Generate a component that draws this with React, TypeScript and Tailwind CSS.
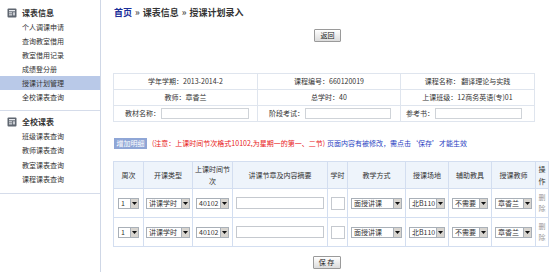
import React from "react";

function Arrow() {
  return (
    <svg width="5" height="3" viewBox="0 0 5 3">
      <path d="M0 0 L5 0 L2.5 3 Z" fill="#111" />
    </svg>
  );
}

function Sel({ text, cls }: { text: string; cls: string }) {
  return (
    <div className={`inline-flex items-center h-[11px] border border-[#a9b0b8] bg-white align-middle ${cls}`}>
      <span className="flex-1 pl-[2px] text-[7px] leading-[9px] text-left text-[#333] whitespace-nowrap">{text}</span>
      <span className="w-[8px] h-[9px] shrink-0 bg-[#d8d5d0] border-l border-[#a9b0b8] flex items-center justify-center">
        <Arrow />
      </span>
    </div>
  );
}

function SideIcon() {
  return (
    <svg width="10" height="10" viewBox="0 0 10 10">
      <rect x="0.5" y="0.5" width="9" height="9" rx="1" fill="#5f6670" />
      <rect x="2" y="2" width="6" height="1.3" fill="#e8eaee" />
      <rect x="2" y="4.3" width="3" height="1.1" fill="#e8eaee" />
      <rect x="2" y="6.3" width="3" height="1.1" fill="#e8eaee" />
      <rect x="5.8" y="4.3" width="2.2" height="3.1" fill="#c9ccd2" />
    </svg>
  );
}

function Btn({ children, cls }: { children: React.ReactNode; cls: string }) {
  return (
    <div
      className={`flex items-center justify-center h-[13px] border border-[#9a9a9a] rounded-[1px] bg-gradient-to-b from-[#ffffff] to-[#dcdcdc] text-[7px] leading-[9px] text-[#222] ${cls}`}
    >
      {children}
    </div>
  );
}

const items1 = ["个人调课申请", "查询教室借用", "教室借用记录", "成绩登分册", "授课计划管理", "全校课表查询"];
const items2 = ["班级课表查询", "教师课表查询", "教室课表查询", "课程课表查询"];

function Row() {
  return (
    <tr className="h-[29px]">
      <td className="border border-[#d3def0] text-center">
        <Sel text="1" cls="w-[21px]" />
      </td>
      <td className="border border-[#d3def0] text-center">
        <Sel text="讲课学时" cls="w-[44px]" />
      </td>
      <td className="border border-[#d3def0] text-center">
        <Sel text="40102" cls="w-[33px]" />
      </td>
      <td className="border border-[#d3def0] text-center">
        <div className="inline-block align-middle w-[88px] h-[12px] border border-[#c5c9cf] bg-white" />
      </td>
      <td className="border border-[#d3def0] text-center">
        <div className="inline-block align-middle w-[14px] h-[13px] border border-[#c5c9cf] bg-white" />
      </td>
      <td className="border border-[#d3def0] text-center">
        <Sel text="面授讲课" cls="w-[51px]" />
      </td>
      <td className="border border-[#d3def0] text-center">
        <Sel text="北B110" cls="w-[36px]" />
      </td>
      <td className="border border-[#d3def0] text-center">
        <Sel text="不需要" cls="w-[36px]" />
      </td>
      <td className="border border-[#d3def0] text-center">
        <Sel text="章香兰" cls="w-[37px]" />
      </td>
      <td className="border border-[#d3def0] text-center text-[7px] leading-[11px] text-[#999]">
        删<br />除
      </td>
    </tr>
  );
}

export default function App() {
  return (
    <div
      className="flex w-[554px] h-[272px] bg-white overflow-hidden"
      style={{ fontFamily: '"Noto Sans CJK SC", "Noto Sans", sans-serif' }}
    >
      {/* Sidebar */}
      <div className="w-[101px] shrink-0 h-full border-r border-[#cfd7e6] flex flex-col">
        <div className="pt-[6px] pb-[6px] border-b border-[#d5dcea]">
          <div className="h-[14px] flex items-center pl-[7px] gap-[5px]">
            <SideIcon />
            <span className="text-[8px] font-bold text-[#333] leading-[10px]">课表信息</span>
          </div>
          {items1.map((t) => (
            <div
              key={t}
              className={`h-[14px] flex items-center pl-[22px] text-[7px] leading-[9px] text-[#333] ${t === "授课计划管理" ? "bg-[#b9c9e8]" : ""}`}
            >
              {t}
            </div>
          ))}
        </div>
        <div className="pt-[4px] pb-[6px] border-b border-[#d5dcea]">
          <div className="h-[14px] flex items-center pl-[7px] gap-[5px]">
            <SideIcon />
            <span className="text-[8px] font-bold text-[#333] leading-[10px]">全校课表</span>
          </div>
          {items2.map((t) => (
            <div key={t} className="h-[14.5px] flex items-center pl-[22px] text-[7px] leading-[9px] text-[#333]">
              {t}
            </div>
          ))}
        </div>
      </div>

      {/* Main */}
      <div className="flex-1 flex flex-col">
        <div className="mt-[7px] h-[12px] pl-[13px] flex items-center text-[9px] font-bold leading-[12px] text-[#333]">
          <span className="text-[#1c2f9a]">首页</span>
          <span className="mx-[3px] text-[#555]">»</span>
          <span>课表信息</span>
          <span className="mx-[3px] text-[#555]">»</span>
          <span>授课计划录入</span>
        </div>

        <div className="mt-[10px] flex justify-center">
          <Btn cls="w-[27px]">返回</Btn>
        </div>

        <table className="mt-[31px] ml-[12px] w-[422px] border-collapse text-[7px] text-[#333] table-fixed">
          <tbody>
            <tr className="h-[16px]">
              <td className="border border-[#dfe5ee] text-center w-[144px]">学年学期：2013-2014-2</td>
              <td className="border border-[#dfe5ee] text-center w-[143px]">课程编号：660120019</td>
              <td className="border border-[#dfe5ee] text-center">课程名称： 翻译理论与实践</td>
            </tr>
            <tr className="h-[16px]">
              <td className="border border-[#dfe5ee] text-center">教师：章香兰</td>
              <td className="border border-[#dfe5ee] text-center">总学时：40</td>
              <td className="border border-[#dfe5ee] text-center">上课班级：12商务英语(专)01</td>
            </tr>
            <tr className="h-[16px]">
              <td className="border border-[#dfe5ee] pl-[11px]">
                <div className="flex items-center">
                  <span>教材名称：</span>
                  <div className="ml-[1px] w-[88px] h-[11px] border border-[#cfd3d8] bg-white" />
                </div>
              </td>
              <td className="border border-[#dfe5ee] pl-[11px]">
                <div className="flex items-center">
                  <span>阶段考试：</span>
                  <div className="ml-[1px] w-[86px] h-[11px] border border-[#cfd3d8] bg-white" />
                </div>
              </td>
              <td className="border border-[#dfe5ee] pl-[5px]">
                <div className="flex items-center">
                  <span>参考书：</span>
                  <div className="ml-[1px] w-[87px] h-[11px] border border-[#cfd3d8] bg-white" />
                </div>
              </td>
            </tr>
          </tbody>
        </table>

        <div className="mt-[16px] ml-[13px] h-[11px] flex items-center text-[7px] leading-[9px]">
          <div className="h-[11px] w-[33px] bg-[#8fa6d6] text-white flex items-center justify-center">增加明细</div>
          <span className="ml-[5px] text-[#e8191a]">(注意：上课时间节次格式10102,为星期一的第一、二节)</span>
          <span className="ml-[2px] text-[#2a3fc2]">页面内容有被修改，需点击‘保存’才能生效</span>
        </div>

        <table className="mt-[12px] ml-[12px] w-[435px] border-collapse table-fixed text-[7px] text-[#333]">
          <colgroup>
            <col className="w-[30px]" />
            <col className="w-[49px]" />
            <col className="w-[40px]" />
            <col className="w-[95px]" />
            <col className="w-[20px]" />
            <col className="w-[58px]" />
            <col className="w-[43px]" />
            <col className="w-[43px]" />
            <col className="w-[44px]" />
            <col className="w-[13px]" />
          </colgroup>
          <thead>
            <tr className="h-[27px] bg-[#eef4fb]">
              <th className="border border-[#d3def0] font-normal">周次</th>
              <th className="border border-[#d3def0] font-normal">开课类型</th>
              <th className="border border-[#d3def0] font-normal leading-[12px]">
                上课时间节
                <br />次
              </th>
              <th className="border border-[#d3def0] font-normal">讲课节章及内容摘要</th>
              <th className="border border-[#d3def0] font-normal">学时</th>
              <th className="border border-[#d3def0] font-normal">教学方式</th>
              <th className="border border-[#d3def0] font-normal">授课场地</th>
              <th className="border border-[#d3def0] font-normal">辅助教具</th>
              <th className="border border-[#d3def0] font-normal">授课教师</th>
              <th className="border border-[#d3def0] font-normal leading-[12px]">
                操<br />作
              </th>
            </tr>
          </thead>
          <tbody>
            <Row />
            <Row />
          </tbody>
        </table>

        <div className="mt-[9px] flex justify-center">
          <Btn cls="w-[28px] h-[12px] -ml-[2px]">保 存</Btn>
        </div>
      </div>
    </div>
  );
}
